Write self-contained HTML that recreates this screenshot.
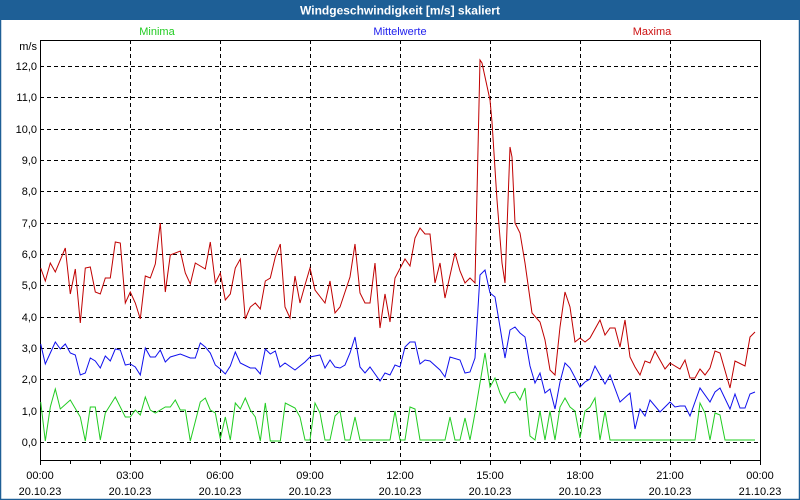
<!DOCTYPE html>
<html><head><meta charset="utf-8"><style>
html,body{margin:0;padding:0;width:800px;height:500px;overflow:hidden;background:#fff}
</style></head><body>
<svg width="800" height="500" xmlns="http://www.w3.org/2000/svg" font-family="Liberation Sans, sans-serif">
<rect x="0" y="0" width="800" height="500" fill="#fff"/>
<rect x="0.5" y="0.5" width="799" height="499" fill="none" stroke="#1e5f96" stroke-width="1.5"/>
<rect x="0" y="0" width="800" height="20" fill="#1e5f96"/>
<text x="400" y="14.5" fill="#fff" font-size="12" font-weight="bold" text-anchor="middle">Windgeschwindigkeit [m/s] skaliert</text>
<g font-size="11" text-anchor="middle">
<text x="157" y="35" fill="#22cc22">Minima</text>
<text x="400" y="35" fill="#2020ee">Mittelwerte</text>
<text x="652" y="35" fill="#cc1111">Maxima</text>
</g>
<g stroke="#000" stroke-width="1" stroke-dasharray="4,3" fill="none">
<path d="M40 442.5H760M40 411.5H760M40 379.5H760M40 348.5H760M40 317.5H760M40 285.5H760M40 254.5H760M40 223.5H760M40 191.5H760M40 160.5H760M40 129.5H760M40 97.5H760M40 66.5H760"/>
<path d="M130.5 40V460M220.5 40V460M310.5 40V460M400.5 40V460M490.5 40V460M580.5 40V460M670.5 40V460"/>
</g>
<rect x="40.5" y="40.5" width="720" height="420" fill="none" stroke="#000" stroke-width="1"/>
<path stroke="#000" d="M40.5 460V465M70.5 460V464M100.5 460V464M130.5 460V465M160.5 460V464M190.5 460V464M220.5 460V465M250.5 460V464M280.5 460V464M310.5 460V465M340.5 460V464M370.5 460V464M400.5 460V465M430.5 460V464M460.5 460V464M490.5 460V465M520.5 460V464M550.5 460V464M580.5 460V465M610.5 460V464M640.5 460V464M670.5 460V465M700.5 460V464M730.5 460V464M760.5 460V465"/>
<g font-size="11" fill="#000" text-anchor="end">
<text x="37" y="50">m/s</text>
<text x="37" y="70">12,0</text><text x="37" y="101">11,0</text><text x="37" y="133">10,0</text>
<text x="37" y="164">9,0</text><text x="37" y="195">8,0</text><text x="37" y="227">7,0</text>
<text x="37" y="258">6,0</text><text x="37" y="289">5,0</text><text x="37" y="321">4,0</text>
<text x="37" y="352">3,0</text><text x="37" y="383">2,0</text><text x="37" y="415">1,0</text>
<text x="37" y="446">0,0</text>
</g>
<g font-size="11" fill="#000" text-anchor="middle">
<text x="40" y="479">00:00</text><text x="40" y="495">20.10.23</text>
<text x="130" y="479">03:00</text><text x="130" y="495">20.10.23</text>
<text x="220" y="479">06:00</text><text x="220" y="495">20.10.23</text>
<text x="310" y="479">09:00</text><text x="310" y="495">20.10.23</text>
<text x="400" y="479">12:00</text><text x="400" y="495">20.10.23</text>
<text x="490" y="479">15:00</text><text x="490" y="495">20.10.23</text>
<text x="580" y="479">18:00</text><text x="580" y="495">20.10.23</text>
<text x="670" y="479">21:00</text><text x="670" y="495">20.10.23</text>
<text x="760" y="479">00:00</text><text x="760" y="495">21.10.23</text>
</g>
<g fill="none" stroke-width="1">
<polyline stroke="#22cc22" points="40.7,402 45.3,441 50.3,407 55.3,389 60.3,409 70.3,400 80.3,417 85.3,441 90.3,407 95.3,407 100.3,440 105.3,413 115.3,397 125.3,417 130.3,417 135.3,410 140.3,415 145.3,397 150.3,410 155.3,413 165.3,407 170.3,407 175.3,400 180.3,410 185.3,410 190.3,441 200.3,402 205.3,398 210.3,410 215.3,413 220.3,439 225.3,417 230.3,440 235.3,403 240.3,409 245.3,398 250.3,410 255.3,417 260.3,441 265.3,403 270.3,441 280.3,441 285.3,403 295,408 300,417 305,440 310,440 315,403 320,413 325,440 330,440 335,416 340,411 345,440 350,440 355,417 360,440 390,440 395,411 400,440 405,440 410,407 415,409 420,440 445,440 450,417 455,440 460,440 465,418 470,440 475,413 480,383 485,353 490,387 495,378 500,393 505,403 510,393 515,392 520,400 525,388 530,436 535,440 540,411 545,440 550,411 555,440 560,407 565,398 570,407 575,411 580,438 585,411 590,407 595,398 600,440 605,411 610,440 695,440 700,403 705,413 710,440 715,413 720,415 725,440 755,440"/>
<polyline stroke="#1010ee" points="40.7,344 45.3,364 50.3,353 55.3,342 60.3,349 65.3,344 70.3,353 75.3,355 80.3,375 85.3,373 90.3,358 95.3,361 100.3,368 105.3,356 110.3,361 115.3,349 120.3,350 125.3,365 130.3,364 135.3,367 140.3,375 145.3,348 150.3,357 155.3,357 160.3,350 165.3,362 170.3,357 180.3,354 190.3,358 195.3,358 200.3,343 205.3,347 210.3,353 215.3,365 220.3,369 225.3,374 230.3,366 235.3,352 240.3,363 250.3,368 255.3,368 260.3,374 265.3,349 270.3,354 275.3,351 280,367 285,363 295,370 305,362 310,357 320,355 325,368 330,360 335,367 340,368 345,365 350,353 355,337 360,367 365,373 370,367 380,381 385,373 390,375 395,365 400,367 405,347 410,342 415,342 420,364 425,360 430,361 440,370 445,377 450,357 460,360 465,373 470,372 475,358 480,275 485,270 490,293 495,297 500,327 505,358 510,330 515,327 520,333 525,337 530,366 535,383 540,373 545,393 550,389 555,409 560,382 565,363 570,368 580,387 585,382 590,379 595,366 605,384 610,375 620,402 630,393 635,429 640,409 645,416 650,400 660,412 670,402 675,407 680,406 685,406 690,416 700,388 710,402 715,392 720,388 730,409 735,394 740,408 745,408 750,394 755,392"/>
<polyline stroke="#c00000" points="40.7,268 45.3,281 50.3,263 55.3,272 65.3,248 70.3,294 75.3,269 80.3,323 85.3,268 90.3,267 95.3,292 100.3,294 105.3,278 110.3,278 115.3,242 120.3,243 125.3,303 130.3,292 135.3,303 140.3,319 145.3,276 150.3,278 155.3,264 160.3,223 165.3,292 170.3,255 180.3,251 185.3,273 190.3,284 195.3,263 205.3,269 210.3,242 215.3,283 220.3,273 225.3,300 230.3,294 235.3,268 240.3,259 245.3,319 250.3,307 255.3,303 260.3,309 265.3,281 270.3,278 275.3,257 280.3,244 285,307 290,318 295,276 300,303 305,285 310,268 315,290 325,303 330,281 335,313 340,307 350,277 355,244 360,293 365,303 370,303 375,263 380,328 385,294 390,322 395,278 405,259 410,266 415,238 420,228 425,234 430,234 435,283 440,263 445,298 455,253 460,271 465,283 470,278 475,283 480,60 482,63 490,100 492,122 497,200 502,263 505,283 510,147 512,157 515,223 520,233 525,263 532,313 540,322 545,340 550,370 555,375 560,327 565,292 570,307 575,342 580,338 585,342 590,338 600,320 605,335 610,328 615,328 620,347 625,320 630,357 635,367 640,375 645,361 650,363 655,351 665,369 670,363 680,369 685,360 690,378 695,378 700,369 705,375 710,368 715,351 720,353 730,388 735,361 745,366 750,337 755,332"/>
</g>
</svg>
</body></html>
